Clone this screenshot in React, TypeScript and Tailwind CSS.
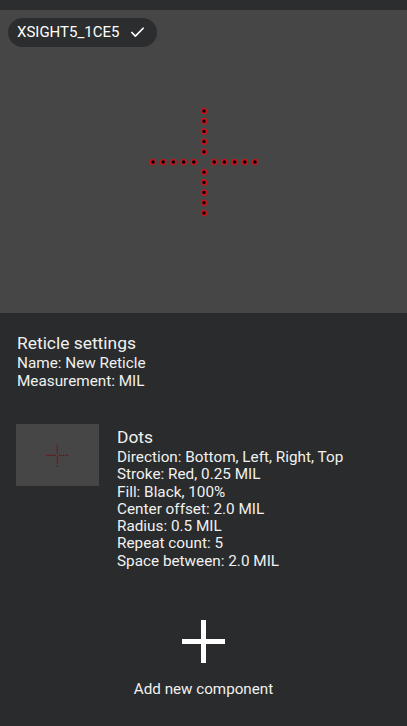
import React from 'react';
import { Check } from 'lucide-react';

// 1 MIL = 5.1px in the preview
const MIL = 5.1;
const CENTER_OFFSET = 2 * MIL;
const SPACE = 2 * MIL;

// dot centres for all four directions, relative to the reticle centre
const dots: { x: number; y: number }[] = [];
for (let i = 0; i < 5; i++) {
  const d = CENTER_OFFSET + i * SPACE;
  dots.push({ x: 0, y: d }, { x: -d, y: 0 }, { x: d, y: 0 }, { x: 0, y: -d });
}

const Reticle = ({ size }: { size: number }) => (
  <svg width={size} height={size} viewBox="-60 -60 120 120">
    {dots.map((p, i) => (
      <circle key={i} cx={p.x} cy={p.y} r={0.5 * MIL} fill="#000" stroke="#c4161c" strokeWidth={1.6} />
    ))}
  </svg>
);

const details = [
  'Direction: Bottom, Left, Right, Top',
  'Stroke: Red, 0.25 MIL',
  'Fill: Black, 100%',
  'Center offset: 2.0 MIL',
  'Radius: 0.5 MIL',
  'Repeat count: 5',
  'Space between: 2.0 MIL',
];

export default function App() {
  return (
    <div className="w-[407px] h-[726px] bg-[#292b2c] text-[#f1f1f1] flex flex-col font-['Roboto',sans-serif] overflow-hidden">
      <div className="h-[10px] bg-[#2b2d2f]" />

      {/* Preview */}
      <div className="relative h-[303px] bg-[#464646] flex items-center justify-center">
        <div className="absolute top-[8px] left-[8px] h-[29px] w-[149px] rounded-full bg-[#2b2d2f] flex items-center pl-[9px] gap-[10px]">
          <span className="text-[15px] text-white">XSIGHT5_1CE5</span>
          <Check className="w-[17px] h-[17px] text-white" strokeWidth={2.4} />
        </div>
        <Reticle size={120} />
      </div>

      {/* Settings */}
      <div className="px-[17px] pt-[20px]">
        <h2 className="text-[17.4px] leading-[20px]">Reticle settings</h2>
        <p className="mt-[1px] text-[15.3px] leading-[18px]">Name: New Reticle</p>
        <p className="text-[15.3px] leading-[18px]">Measurement: MIL</p>
      </div>

      <div className="flex pl-[16px] mt-[34px] gap-[18px]">
        <div className="w-[83px] h-[62px] bg-[#464646] flex items-center justify-center shrink-0">
          <Reticle size={24.5} />
        </div>
        <div className="pt-[3px]">
          <h3 className="text-[17.4px] leading-[20px]">Dots</h3>
          <div className="mt-[2px]">
            {details.map((line) => (
              <p key={line} className="text-[15.3px] leading-[17.3px]">{line}</p>
            ))}
          </div>
        </div>
      </div>

      {/* Add component */}
      <div className="flex flex-col items-center mt-[50px]">
        <svg width="43" height="43" viewBox="0 0 43 43">
          <rect x="19" y="0" width="5" height="43" fill="#fff" />
          <rect x="0" y="19" width="43" height="5" fill="#fff" />
        </svg>
        <span className="mt-[17px] text-[15.2px] leading-[18px]">Add new component</span>
      </div>
    </div>
  );
}
